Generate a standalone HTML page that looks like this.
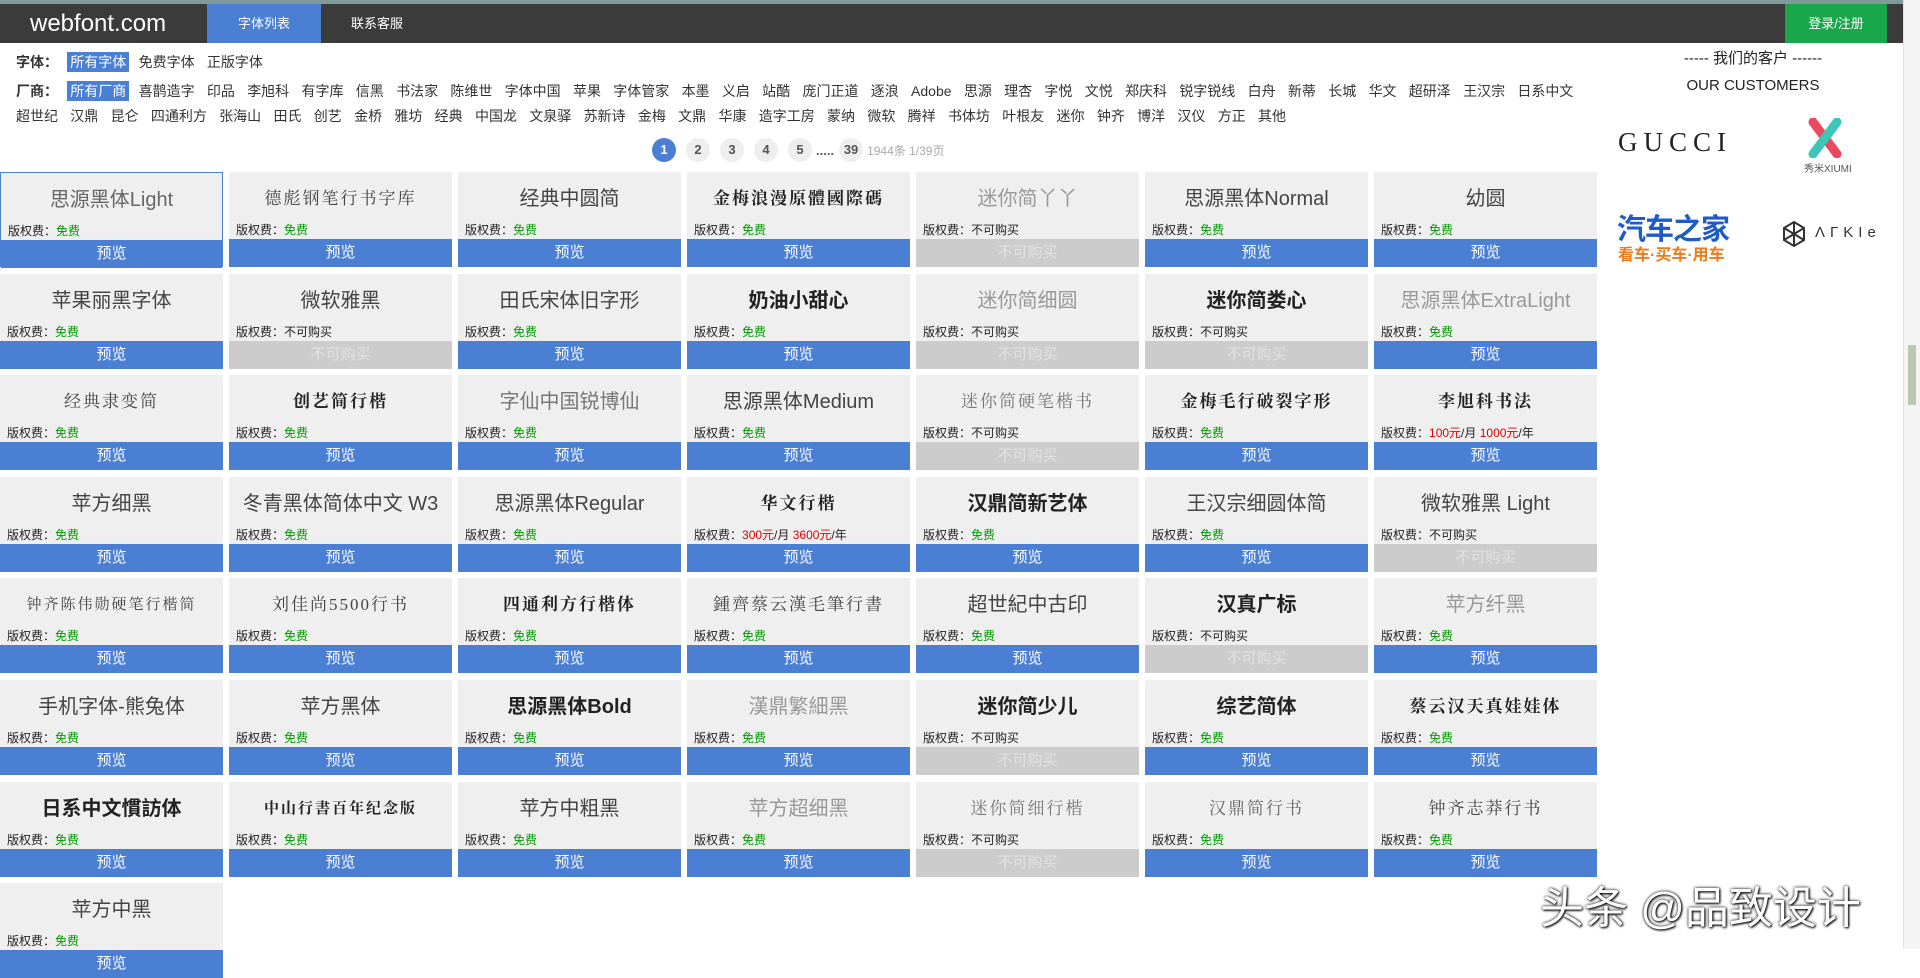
<!DOCTYPE html>
<html><head><meta charset="utf-8"><style>
*{margin:0;padding:0;box-sizing:border-box}
body{width:1920px;height:949px;overflow:hidden;background:#fff;font-family:"Liberation Sans","Noto Sans CJK SC",sans-serif;color:#333;position:relative}
.top{position:absolute;left:0;top:0;width:1903px;height:4px;background:#7f9a98}
.nav{position:absolute;left:0;top:4px;width:1903px;height:39px;background:#3b3b3b}
.logo{position:absolute;left:30px;top:6px;color:#fff;font-size:24px}
.tab{position:absolute;left:207px;top:0;width:114px;height:39px;background:#4a7fd4;color:#fff;font-size:13px;text-align:center;line-height:39px}
.tab2{position:absolute;left:351px;top:0;height:39px;color:#fff;font-size:13px;line-height:39px}
.login{position:absolute;left:1785px;top:0;width:102px;height:39px;background:#1aa64a;color:#fff;font-size:13px;text-align:center;line-height:39px}
.sb{position:absolute;left:1903px;top:0;width:17px;height:949px;background:#f4f4f4;border-left:1px solid #e4e4e4}
.sb i{position:absolute;left:4px;top:345px;width:8px;height:60px;background:#b9c9b0}
.f{position:absolute;left:16px;font-size:14px;line-height:20px;display:flex;flex-wrap:wrap;column-gap:12.3px;row-gap:5px;width:1575px}
.f b{font-weight:bold;width:45px;margin-right:-3px}
.f .on{background:#4a7fd4;color:#fff;padding:0 3px;margin:0 -3px}
.pg{position:absolute;top:138px;left:652px;display:flex;align-items:center;font-size:13px;font-weight:bold;color:#555}
.pg span{width:24px;height:24px;border-radius:50%;background:#eee;text-align:center;line-height:24px;margin-right:10px}
.pg span.a{background:#4a7fd4;color:#fff}
.grid{position:absolute;left:0;top:172px;display:grid;grid-template-columns:repeat(7,223px);column-gap:6px;row-gap:6.6px}
.c{height:95px;background:#efefef;position:relative}
.c.s{border:1px solid #4a7fd4}
.t{position:absolute;left:0;right:0;top:12px;text-align:center;font-size:20px;line-height:30px;color:#444}
.t.l{color:#999}.t.k{font-weight:bold;color:#222}.t.w{font-family:"Liberation Serif","Noto Serif CJK SC",serif;font-size:17px;letter-spacing:2px}
.p{position:absolute;left:7px;top:49px;font-size:12px;color:#222}
.p .g{color:#090}.p .r{color:#d00}
.b{position:absolute;left:0;right:0;top:67px;height:28px;background:#4a7fd4;color:#fff;text-align:center;line-height:28px;font-size:15px}
.b.x{background:#ccc;color:#e2e2e2}
.cu{position:absolute;left:1648px;width:210px;text-align:center;font-size:15px;color:#222}
.wm{position:absolute;left:1540px;top:872px;font-size:44px;color:#fff;text-shadow:0 0 3px #000,1px 1px 2px #000}
</style></head><body>
<div class="top"></div>
<div class="nav"><div class="logo">webfont.com</div><div class="tab">字体列表</div><div class="tab2">联系客服</div><div class="login">登录/注册</div></div>
<div class="f" style="top:52px"><b>字体：</b><span class="on">所有字体</span><span>免费字体</span><span>正版字体</span></div>
<div class="f" style="top:81px"><b>厂商：</b><span class="on">所有厂商</span><span>喜鹊造字</span><span>印品</span><span>李旭科</span><span>有字库</span><span>信黑</span><span>书法家</span><span>陈维世</span><span>字体中国</span><span>苹果</span><span>字体管家</span><span>本墨</span><span>义启</span><span>站酷</span><span>庞门正道</span><span>逐浪</span><span>Adobe</span><span>思源</span><span>理杏</span><span>字悦</span><span>文悦</span><span>郑庆科</span><span>锐字锐线</span><span>白舟</span><span>新蒂</span><span>长城</span><span>华文</span><span>超研泽</span><span>王汉宗</span><span>日系中文</span><span>超世纪</span><span>汉鼎</span><span>昆仑</span><span>四通利方</span><span>张海山</span><span>田氏</span><span>创艺</span><span>金桥</span><span>雅坊</span><span>经典</span><span>中国龙</span><span>文泉驿</span><span>苏新诗</span><span>金梅</span><span>文鼎</span><span>华康</span><span>造字工房</span><span>蒙纳</span><span>微软</span><span>腾祥</span><span>书体坊</span><span>叶根友</span><span>迷你</span><span>钟齐</span><span>博洋</span><span>汉仪</span><span>方正</span><span>其他</span></div>
<div class="pg"><span class="a">1</span><span>2</span><span>3</span><span>4</span><span>5</span><em style="font-style:normal;margin:0 2px 0 -6px">.....</em><span style="margin-left:3px;margin-right:4px">39</span><em style="font-style:normal;font-weight:normal;color:#aaa;font-size:12px">1944条 1/39页</em></div>
<div class="cu" style="top:47px">----- 我们的客户 ------</div>
<div class="cu" style="top:77px">OUR CUSTOMERS</div>
<div style="position:absolute;left:1618px;top:127px;font-family:'Liberation Serif',serif;font-size:27px;letter-spacing:6px;color:#222">GUCCI</div>
<svg style="position:absolute;left:1805px;top:118px" width="40" height="40" viewBox="0 0 40 40"><path d="M8 4 L32 36" stroke="#e94a5f" stroke-width="9" stroke-linecap="round"/><path d="M32 4 L8 36" stroke="#3cc6b8" stroke-width="9" stroke-linecap="round"/></svg>
<div style="position:absolute;left:1804px;top:160px;font-size:10px;color:#555">秀米XIUMI</div>
<div style="position:absolute;left:1617px;top:206px;font-size:29px;font-weight:bold;color:#1e5bc6;letter-spacing:-1px">汽车之家</div>
<div style="position:absolute;left:1618px;top:241px;font-size:16px;font-weight:bold;color:#f07a1a">看车·买车·用车</div>
<svg style="position:absolute;left:1782px;top:220px" width="24" height="28" viewBox="0 0 24 28"><path d="M12 2 L22 8 L22 20 L12 26 L2 20 L2 8Z M12 2 L12 26 M2 8 L22 20 M22 8 L2 20" stroke="#333" stroke-width="2" fill="none"/></svg>
<div style="position:absolute;left:1815px;top:224px;font-size:15px;letter-spacing:5px;color:#333">ΛΓKIe</div>
<div class="grid">
<div class="c s"><div class="t l" style="color:#666">思源黑体Light</div><div class="p">版权费：<span class="g">免费</span></div><div class="b">预览</div></div>
<div class="c"><div class="t w">德彪钢笔行书字库</div><div class="p">版权费：<span class="g">免费</span></div><div class="b">预览</div></div>
<div class="c"><div class="t">经典中圆简</div><div class="p">版权费：<span class="g">免费</span></div><div class="b">预览</div></div>
<div class="c"><div class="t k w">金梅浪漫原體國際碼</div><div class="p">版权费：<span class="g">免费</span></div><div class="b">预览</div></div>
<div class="c"><div class="t l">迷你简丫丫</div><div class="p">版权费：不可购买</div><div class="b x">不可购买</div></div>
<div class="c"><div class="t">思源黑体Normal</div><div class="p">版权费：<span class="g">免费</span></div><div class="b">预览</div></div>
<div class="c"><div class="t">幼圆</div><div class="p">版权费：<span class="g">免费</span></div><div class="b">预览</div></div>

<div class="c"><div class="t">苹果丽黑字体</div><div class="p">版权费：<span class="g">免费</span></div><div class="b">预览</div></div>
<div class="c"><div class="t">微软雅黑</div><div class="p">版权费：不可购买</div><div class="b x">不可购买</div></div>
<div class="c"><div class="t">田氏宋体旧字形</div><div class="p">版权费：<span class="g">免费</span></div><div class="b">预览</div></div>
<div class="c"><div class="t k">奶油小甜心</div><div class="p">版权费：<span class="g">免费</span></div><div class="b">预览</div></div>
<div class="c"><div class="t l">迷你简细圆</div><div class="p">版权费：不可购买</div><div class="b x">不可购买</div></div>
<div class="c"><div class="t k">迷你简娄心</div><div class="p">版权费：不可购买</div><div class="b x">不可购买</div></div>
<div class="c"><div class="t l">思源黑体ExtraLight</div><div class="p">版权费：<span class="g">免费</span></div><div class="b">预览</div></div>

<div class="c"><div class="t w">经典隶变简</div><div class="p">版权费：<span class="g">免费</span></div><div class="b">预览</div></div>
<div class="c"><div class="t w k">创艺简行楷</div><div class="p">版权费：<span class="g">免费</span></div><div class="b">预览</div></div>
<div class="c"><div class="t" style="color:#777">字仙中国锐博仙</div><div class="p">版权费：<span class="g">免费</span></div><div class="b">预览</div></div>
<div class="c"><div class="t">思源黑体Medium</div><div class="p">版权费：<span class="g">免费</span></div><div class="b">预览</div></div>
<div class="c"><div class="t w" style="color:#777">迷你简硬笔楷书</div><div class="p">版权费：不可购买</div><div class="b x">不可购买</div></div>
<div class="c"><div class="t w k">金梅毛行破裂字形</div><div class="p">版权费：<span class="g">免费</span></div><div class="b">预览</div></div>
<div class="c"><div class="t w k">李旭科书法</div><div class="p">版权费：<span class="r">100元</span>/月 <span class="r">1000元</span>/年</div><div class="b">预览</div></div>

<div class="c"><div class="t">苹方细黑</div><div class="p">版权费：<span class="g">免费</span></div><div class="b">预览</div></div>
<div class="c"><div class="t">冬青黑体简体中文 W3</div><div class="p">版权费：<span class="g">免费</span></div><div class="b">预览</div></div>
<div class="c"><div class="t">思源黑体Regular</div><div class="p">版权费：<span class="g">免费</span></div><div class="b">预览</div></div>
<div class="c"><div class="t w k">华文行楷</div><div class="p">版权费：<span class="r">300元</span>/月 <span class="r">3600元</span>/年</div><div class="b">预览</div></div>
<div class="c"><div class="t k">汉鼎简新艺体</div><div class="p">版权费：<span class="g">免费</span></div><div class="b">预览</div></div>
<div class="c"><div class="t">王汉宗细圆体简</div><div class="p">版权费：<span class="g">免费</span></div><div class="b">预览</div></div>
<div class="c"><div class="t">微软雅黑 Light</div><div class="p">版权费：不可购买</div><div class="b x">不可购买</div></div>

<div class="c"><div class="t w" style="font-size:15px">钟齐陈伟勋硬笔行楷简</div><div class="p">版权费：<span class="g">免费</span></div><div class="b">预览</div></div>
<div class="c"><div class="t w">刘佳尚5500行书</div><div class="p">版权费：<span class="g">免费</span></div><div class="b">预览</div></div>
<div class="c"><div class="t w k">四通利方行楷体</div><div class="p">版权费：<span class="g">免费</span></div><div class="b">预览</div></div>
<div class="c"><div class="t w">鍾齊蔡云漢毛筆行書</div><div class="p">版权费：<span class="g">免费</span></div><div class="b">预览</div></div>
<div class="c"><div class="t">超世紀中古印</div><div class="p">版权费：<span class="g">免费</span></div><div class="b">预览</div></div>
<div class="c"><div class="t k">汉真广标</div><div class="p">版权费：不可购买</div><div class="b x">不可购买</div></div>
<div class="c"><div class="t l">苹方纤黑</div><div class="p">版权费：<span class="g">免费</span></div><div class="b">预览</div></div>

<div class="c"><div class="t">手机字体-熊兔体</div><div class="p">版权费：<span class="g">免费</span></div><div class="b">预览</div></div>
<div class="c"><div class="t">苹方黑体</div><div class="p">版权费：<span class="g">免费</span></div><div class="b">预览</div></div>
<div class="c"><div class="t k">思源黑体Bold</div><div class="p">版权费：<span class="g">免费</span></div><div class="b">预览</div></div>
<div class="c"><div class="t l">漢鼎繁細黑</div><div class="p">版权费：<span class="g">免费</span></div><div class="b">预览</div></div>
<div class="c"><div class="t k">迷你简少儿</div><div class="p">版权费：不可购买</div><div class="b x">不可购买</div></div>
<div class="c"><div class="t k">综艺简体</div><div class="p">版权费：<span class="g">免费</span></div><div class="b">预览</div></div>
<div class="c"><div class="t w k">蔡云汉天真娃娃体</div><div class="p">版权费：<span class="g">免费</span></div><div class="b">预览</div></div>

<div class="c"><div class="t k">日系中文慣訪体</div><div class="p">版权费：<span class="g">免费</span></div><div class="b">预览</div></div>
<div class="c"><div class="t w k" style="font-size:15px">中山行書百年纪念版</div><div class="p">版权费：<span class="g">免费</span></div><div class="b">预览</div></div>
<div class="c"><div class="t">苹方中粗黑</div><div class="p">版权费：<span class="g">免费</span></div><div class="b">预览</div></div>
<div class="c"><div class="t l">苹方超细黑</div><div class="p">版权费：<span class="g">免费</span></div><div class="b">预览</div></div>
<div class="c"><div class="t w" style="color:#777">迷你简细行楷</div><div class="p">版权费：不可购买</div><div class="b x">不可购买</div></div>
<div class="c"><div class="t w" style="color:#666">汉鼎简行书</div><div class="p">版权费：<span class="g">免费</span></div><div class="b">预览</div></div>
<div class="c"><div class="t w">钟齐志莽行书</div><div class="p">版权费：<span class="g">免费</span></div><div class="b">预览</div></div>

<div class="c"><div class="t">苹方中黑</div><div class="p">版权费：<span class="g">免费</span></div><div class="b">预览</div></div>
</div>
<div class="wm">头条 @品致设计</div>
<div class="sb"><i></i></div>
</body></html>
